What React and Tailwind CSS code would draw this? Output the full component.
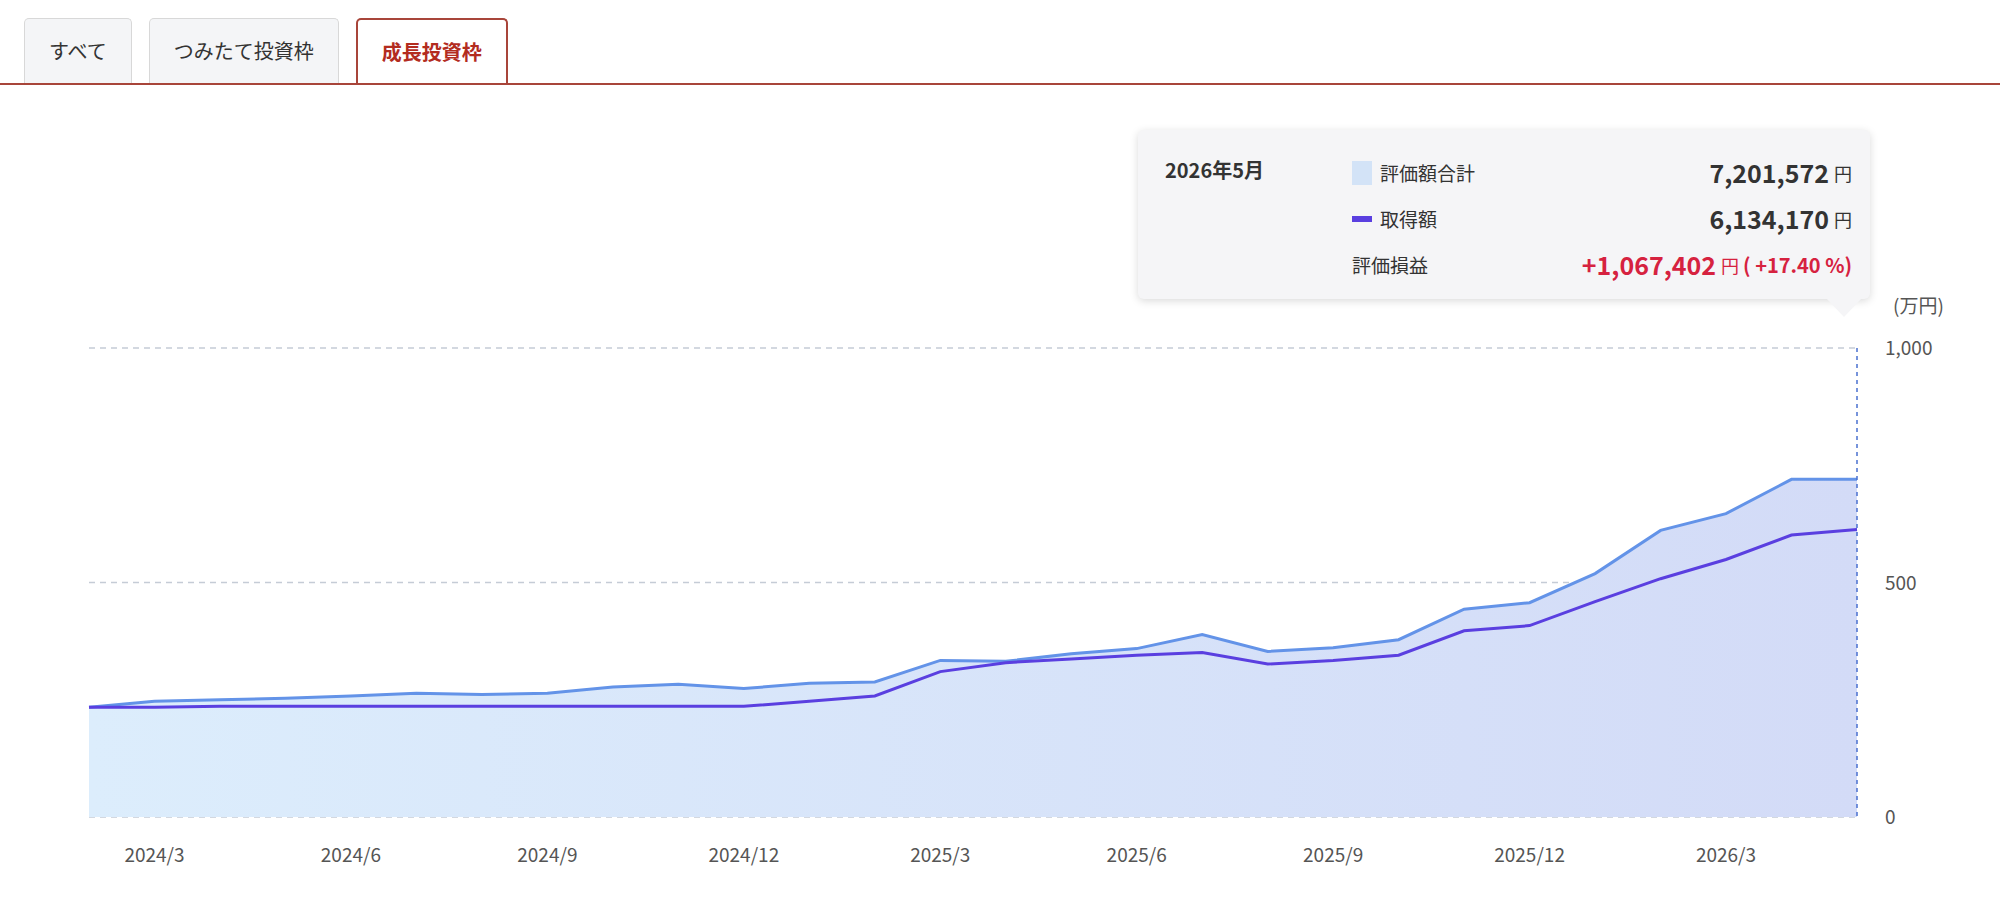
import React from 'react';

const months = [
  '2024/2','2024/3','2024/4','2024/5','2024/6','2024/7','2024/8','2024/9','2024/10','2024/11','2024/12',
  '2025/1','2025/2','2025/3','2025/4','2025/5','2025/6','2025/7','2025/8','2025/9','2025/10','2025/11','2025/12',
  '2026/1','2026/2','2026/3','2026/4','2026/5',
];
const evalVals = [234,247,250,253,258,264,261,264,277,283,274,285,288,334,332,348,359,389,353,361,378,443,457,519,611,647,720,720];
const costVals = [234,234,236,236,236,236,236,236,236,236,236,247,258,310,329,337,345,351,326,334,345,397,408,459,508,549,601,613];

// plot geometry (svg coords, svg starts below tabs)
const X0 = 89, X1 = 1857, TOP = 263, BOT = 732;
const px = (i) => X0 + (i * (X1 - X0)) / (months.length - 1);
const py = (v) => BOT - (v / 1000) * (BOT - TOP);
const line = (vals) => vals.map((v, i) => `${i ? 'L' : 'M'}${px(i).toFixed(1)},${py(v).toFixed(1)}`).join(' ');

const font = '"Noto Sans CJK JP", "Liberation Sans", sans-serif';

const Tabs = () => {
  const tabs = ['すべて', 'つみたて投資枠', '成長投資枠'];
  return (
    <div className="flex items-end gap-[17px] pl-[24px] pt-[18px] border-b-2 border-[#a8453a]">
      {tabs.map((t, i) => (
        <div
          key={t}
          className={`h-[65px] flex items-center px-[24px] rounded-t-[5px] border border-b-0 text-[20px] ${
            i === 2
              ? 'bg-white border-[#a8453a] border-2 text-[#b32c1f] font-bold'
              : 'bg-[#f4f5f7] border-[#d8d8d8] text-[#333]'
          }`}
        >
          {t}
        </div>
      ))}
    </div>
  );
};

const Chart = () => {
  const evalPath = line(evalVals);
  const area = `${evalPath} L${X1},${BOT} L${X0},${BOT} Z`;
  return (
    <svg width="2000" height="814" className="block" style={{ fontFamily: font }}>
      <defs>
        <linearGradient id="fill" x1="0" x2="1" y1="0" y2="0">
          <stop offset="0" stopColor="#dcedfc" />
          <stop offset="1" stopColor="#d3dbf7" />
        </linearGradient>
      </defs>
      {[1000, 500, 0].map((v) => (
        <g key={v}>
          <line x1={X0} x2={X1} y1={py(v)} y2={py(v)} stroke="#c5ccd6" strokeDasharray="6 5" strokeWidth="1.3" />
          <text x="1885" y={py(v) + 7} fontSize="19" fill="#555">{v === 1000 ? '1,000' : v}</text>
        </g>
      ))}
      <text x="1893" y="228" fontSize="19" fill="#555">(万円)</text>
      <path d={area} fill="url(#fill)" />
      <path d={evalPath} fill="none" stroke="#6393e8" strokeWidth="3" />
      <path d={line(costVals)} fill="none" stroke="#5a3fe0" strokeWidth="3" />
      <line x1={X1} x2={X1} y1={TOP} y2={BOT} stroke="#4a70cf" strokeDasharray="4 4" strokeWidth="1.5" />
      {months.map((m, i) =>
        /\/(3|6|9|12)$/.test(m) ? (
          <text key={m} x={px(i)} y="777" fontSize="19" fill="#555" textAnchor="middle">{m}</text>
        ) : null
      )}
    </svg>
  );
};

const Tooltip = () => (
  <div className="absolute left-[1138px] top-[45px] w-[732px] h-[169px] bg-[#f5f5f7] rounded-[6px] shadow-[0_2px_8px_rgba(0,0,0,0.15)] text-[#333]">
    <div className="absolute right-[8px] -bottom-[18px] w-0 h-0 border-l-[18px] border-r-[18px] border-t-[19px] border-l-transparent border-r-transparent border-t-[#f5f5f7]" />
    <div className="flex pt-[25px] pl-[27px] pr-[18px]">
      <div className="w-[187px] text-[20px] font-bold">2026年5月</div>
      <div className="flex-1 flex flex-col gap-[10px]">
        <div className="flex items-center h-[36px]">
          <div className="w-[20px] h-[24px] bg-[#d3e3f7] mr-[8px]" />
          <span className="text-[19px]">評価額合計</span>
          <span className="ml-auto text-[25px] font-bold">7,201,572</span>
          <span className="ml-[5px] text-[18px]">円</span>
        </div>
        <div className="flex items-center h-[36px]">
          <div className="w-[20px] h-[6px] bg-[#5a3fe0] mr-[8px]" />
          <span className="text-[19px]">取得額</span>
          <span className="ml-auto text-[25px] font-bold">6,134,170</span>
          <span className="ml-[5px] text-[18px]">円</span>
        </div>
        <div className="flex items-center h-[36px] text-[#d6223f]">
          <span className="text-[19px] text-[#333]">評価損益</span>
          <span className="ml-auto text-[25px] font-bold">+1,067,402</span>
          <span className="ml-[5px] text-[18px]">円</span>
          <span className="ml-[4px] text-[20px] font-bold">( +17.40 %)</span>
        </div>
      </div>
    </div>
  </div>
);

export default function App() {
  return (
    <div className="w-[2000px] h-[899px] bg-white overflow-hidden" style={{ fontFamily: font }}>
      <Tabs />
      <div className="relative">
        <Chart />
        <Tooltip />
      </div>
    </div>
  );
}
